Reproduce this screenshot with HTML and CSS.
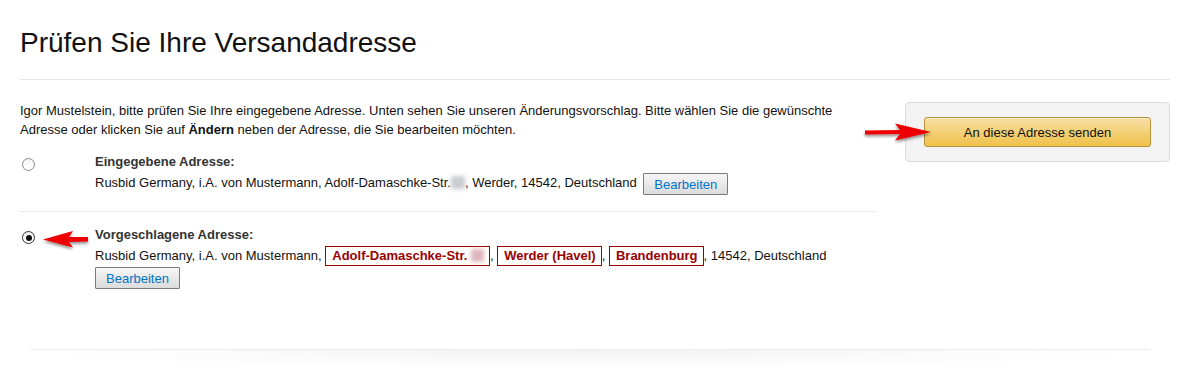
FILE: index.html
```html
<!DOCTYPE html>
<html lang="de">
    <head>
        <meta charset="UTF-8">
        <meta name="viewport" content="width=device-width, initial-scale=1.0">
        <title>Versandadresse prüfen</title>
        <link rel="stylesheet" href="styles.css">
    </head>
    <body>
        <div class="page">
            <h1>Prüfen Sie Ihre Versandadresse</h1>
            <hr class="rule">

            <div class="content">
                <div class="left">
                    <p class="intro">
                        <span>Igor Mustelstein, bitte prüfen Sie Ihre eingegebene Adresse. Unten sehen Sie unseren Änderungsvorschlag. Bitte wählen Sie die gewünschte</span><br>
                        <span>Adresse oder klicken Sie auf</span> <b>Ändern</b> <span>neben der Adresse, die Sie bearbeiten möchten.</span>
                    </p>

                    <div class="option first">
                        <div class="radio-col"><span class="radio"></span></div>
                        <div class="address">
                            <div class="label">Eingegebene Adresse:</div>
                            <div class="line">
                                Rusbid Germany, i.A. von Mustermann, Adolf-Damaschke-Str.<span class="blur"></span>, Werder, 14542, Deutschland
                                <button class="edit">Bearbeiten</button>
                            </div>
                        </div>
                    </div>

                    <div class="option">
                        <div class="radio-col"><span class="radio checked"></span></div>
                        <div class="address">
                            <div class="label">Vorgeschlagene Adresse:</div>
                            <div class="line">
                                Rusbid Germany, i.A. von Mustermann,
                                <span class="changed">Adolf-Damaschke-Str. <span class="blur pink"></span></span>,
                                <span class="changed">Werder (Havel)</span>,
                                <span class="changed">Brandenburg</span>, 14542, Deutschland
                            </div>
                            <button class="edit">Bearbeiten</button>
                        </div>
                    </div>
                </div>

                <div class="right">
                    <div class="send-box">
                        <button class="send">An diese Adresse senden</button>
                    </div>
                </div>
            </div>

            <div class="shade"></div>
        </div>

        <!-- annotation arrows drawn over the page -->
        <svg class="arrow arrow-send" width="80" height="30" viewBox="0 0 80 30">
            <defs>
                <filter id="sh1" x="-20%" y="-40%" width="140%" height="200%">
                    <feDropShadow dx="0" dy="2" stdDeviation="1.6" flood-color="#000" flood-opacity="0.45"/>
                </filter>
            </defs>
            <path d="M7 12.5 L42 12 L37 5.5 L73 14 L37 22.5 L42 16 L7 16.5 Z" fill="#ee0000" filter="url(#sh1)"/>
        </svg>
        <svg class="arrow arrow-radio" width="56" height="30" viewBox="0 0 56 30">
            <defs>
                <filter id="sh2" x="-20%" y="-40%" width="140%" height="200%">
                    <feDropShadow dx="0" dy="2" stdDeviation="1.6" flood-color="#000" flood-opacity="0.45"/>
                </filter>
            </defs>
            <path d="M4 14.5 L34 6 L30 12 L49 12 L49 16.5 L30 17 L34 22.5 Z" fill="#ee0000" filter="url(#sh2)"/>
        </svg>
    </body>
</html>
```

FILE: styles.css
```css
* {
    box-sizing: border-box;
}

body {
    margin: 0;
    font-family: "Liberation Sans", Arial, sans-serif;
    font-size: 13px;
    line-height: 19px;
    color: #111;
    background: #fff;
}

.page {
    padding: 0 12px 0 20px;
}

h1 {
    margin: 26px 0 0;
    font-size: 28px;
    line-height: 34px;
    font-weight: normal;
    color: #111;
}

.rule {
    margin: 19px 0 0;
    border: 0;
    border-top: 1px solid #e7e7e7;
    height: 0;
}

.content {
    display: flex;
    margin-top: 21px;
}

.left {
    width: 855px;
}

.intro {
    margin: 0;
    color: #111;
}

.option {
    display: flex;
    padding-top: 13px;
}
.option.first {
    padding-bottom: 16px;
    border-bottom: 1px solid #e7e7e7;
}

.radio-col {
    width: 75px;
    flex: none;
}

.radio {
    display: block;
    width: 13px;
    height: 13px;
    margin: 6px 0 0 2px;
    border: 1px solid #8a8a8a;
    border-radius: 50%;
    background: linear-gradient(#f4f4f4, #fff);
    position: relative;
}
.radio.checked {
    border-color: #333;
}
.radio.checked::after {
    content: '';
    position: absolute;
    top: 2.5px; left: 2.5px;
    width: 6px;
    height: 6px;
    border-radius: 50%;
    background: #111;
}

.label {
    font-weight: bold;
    color: #333;
}

.line {
    color: #111;
    margin-top: 2px;
}

.blur {
    display: inline-block;
    width: 14px;
    height: 13px;
    vertical-align: -2px;
    background: #c9ccd0;
    filter: blur(2px);
}
.blur.pink {
    background: #ddb6bc;
    width: 13px;
}

.changed {
    display: inline-block;
    border: 1px solid #990000;
    color: #990000;
    font-weight: bold;
    padding: 0 5px 0 6px;
    line-height: 18px;
}

.edit {
    font-family: inherit;
    font-size: 13px;
    color: #0073c6;
    height: 22px;
    padding: 0 10px;
    margin-left: 3px;
    border: 1px solid #7a7a7a;
    border-radius: 1px;
    background: linear-gradient(#f6f6f6, #dcdcdc);
    vertical-align: middle;
}
.option .address > .edit {
    margin: 1px 0 0;
}

.right {
    flex: none;
    margin-left: 30px;
    width: 265px;
}

.send-box {
    margin-top: 1px;
    background: #f3f3f3;
    border: 1px solid #ddd;
    border-radius: 4px;
    padding: 14px 18px;
}

.send {
    display: block;
    width: 227px;
    height: 30px;
    font-family: inherit;
    font-size: 13px;
    color: #111;
    border: 1px solid #b5923a;
    border-radius: 3px;
    background: linear-gradient(#f7dfa5, #f0c14b);
    box-shadow: inset 0 1px 0 rgba(255, 255, 255, 0.4);
}

.shade {
    margin: 60px 20px 0 10px;
    height: 20px;
    border-top: 1px solid #ececec;
    background: radial-gradient(ellipse 50% 100% at 50% 0, rgba(0, 0, 0, 0.05), rgba(0, 0, 0, 0) 100%);
}

.arrow {
    position: absolute;
}
.arrow-send {
    left: 858px;
    top: 118px;
}
.arrow-radio {
    left: 39px;
    top: 225px;
}
```
